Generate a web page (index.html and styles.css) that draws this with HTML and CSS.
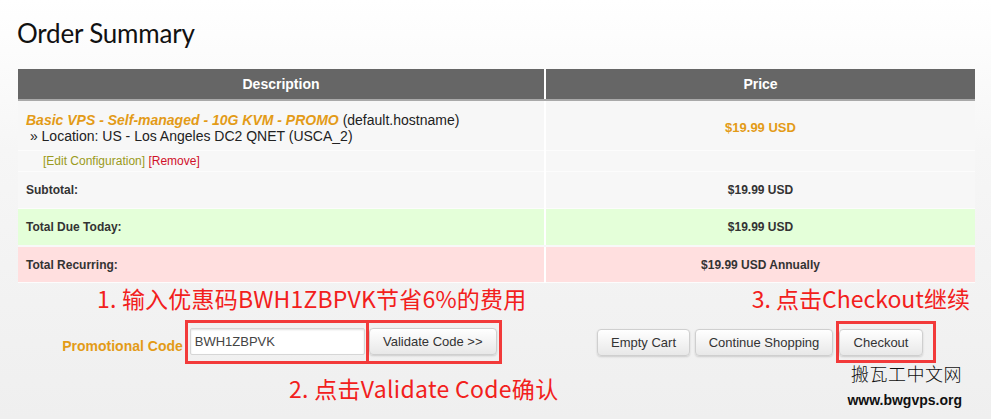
FILE: index.html
```html
<!DOCTYPE html>
<html lang="zh-CN">
<head>
  <meta charset="UTF-8">
  <title>Order Summary</title>
  <link rel="stylesheet" href="styles.css">
</head>
<body>
  <div class="page">
    <h1 class="title">Order Summary</h1>

    <table class="cart">
      <thead>
        <tr>
          <th class="col-desc">Description</th>
          <th class="col-price">Price</th>
        </tr>
      </thead>
      <tbody>
        <tr class="row-product">
          <td class="col-desc">
            <span class="product-name">Basic VPS - Self-managed - 10G KVM - PROMO</span> (default.hostname)<br>
            &nbsp;» Location: US - Los Angeles DC2 QNET (USCA_2)
          </td>
          <td class="col-price product-price">$19.99 USD</td>
        </tr>
        <tr class="row-config">
          <td class="col-desc"><span class="edit">[Edit Configuration]</span> <span class="remove">[Remove]</span></td>
          <td class="col-price"></td>
        </tr>
        <tr class="row-total">
          <td class="col-desc">Subtotal:</td>
          <td class="col-price">$19.99 USD</td>
        </tr>
        <tr class="row-total due">
          <td class="col-desc">Total Due Today:</td>
          <td class="col-price">$19.99 USD</td>
        </tr>
        <tr class="row-total recurring">
          <td class="col-desc">Total Recurring:</td>
          <td class="col-price">$19.99 USD Annually</td>
        </tr>
      </tbody>
    </table>

    <div class="halves note-row">
      <div class="half-left"><p class="note note-1">1. 输入优惠码BWH1ZBPVK节省6%的费用</p></div>
      <div class="half-right"><p class="note note-3">3. 点击Checkout继续</p></div>
    </div>

    <div class="halves action-row">
      <div class="half-left promo">
        <label class="promo-label">Promotional Code</label>
        <span class="mark mark-input"><input class="promo-input" type="text" value="BWH1ZBPVK"></span>
        <span class="mark mark-validate"><button class="btn btn-validate">Validate Code &gt;&gt;</button></span>
      </div>
      <div class="half-right buttons">
        <button class="btn btn-empty">Empty Cart</button>
        <button class="btn btn-continue">Continue Shopping</button>
        <span class="mark mark-checkout"><button class="btn btn-checkout">Checkout</button></span>
      </div>
    </div>

    <div class="halves bottom-row">
      <div class="half-left"><p class="note note-2">2. 点击Validate Code确认</p></div>
      <div class="half-right">
        <div class="watermark">
          <div class="wm-cn">搬瓦工中文网</div>
          <div class="wm-url">www.bwgvps.org</div>
        </div>
      </div>
    </div>
  </div>
</body>
</html>
```

FILE: styles.css
```css
html, body { margin: 0; padding: 0; }
body { background: linear-gradient(#ffffff 0px, #f6f6f6 150px, #efefef 419px); min-height: 419px; font-family: "Liberation Sans", Arial, sans-serif; color: #222; overflow: hidden; }
.page { width: 957px; padding: 0 0 0 18px; }

.title { font-family: Lato, "Open Sans", sans-serif; font-weight: 400; font-size: 26px; line-height: 36px; letter-spacing: -0.2px; color: #111; margin: 0 0 0 -1px; padding: 15px 0 0 0; height: 69px; box-sizing: border-box; }

.cart { width: 957px; border-collapse: collapse; }
.cart th { background: #666; color: #fff; font-size: 14px; font-weight: bold; height: 30px; padding: 0; border-bottom: 2px solid #a9a9a9; }
.cart th.col-desc { width: 526px; border-right: 2px solid #fff; }
.cart td { padding: 0; border-bottom: 1px solid #fcfcfc; background: #f7f7f7; }
.cart td.col-desc { border-right: 2px solid #fff; padding-left: 8px; }
.cart td.col-price { text-align: center; }

.row-product td { height: 45px; font-size: 14px; line-height: 16px; color: #222; padding-top: 4px; }
.product-name { color: #e39b17; font-weight: bold; font-style: italic; }
.row-product td.product-price { color: #e39b17; font-weight: bold; font-size: 13px; padding-top: 4px; height: 45px; }

.row-config td { height: 20px; font-size: 12px; }
.row-config td.col-desc { padding-left: 25px; }
.edit { color: #9a9a20; }
.remove { color: #d0102a; }

.row-total td { height: 36px; font-size: 12px; font-weight: bold; color: #333; }
.row-total.due td { background: #e4ffd9; border-bottom: 2px solid #f8f8f8; }
.row-total.recurring td { background: #ffdfdf; height: 35px; }

.halves { display: flex; }
.half-left { width: 528px; }
.half-right { width: 429px; }

.note { margin: 0; color: #f2201c; font-family: "Noto Sans CJK SC", "Liberation Sans", sans-serif; font-size: 23px; line-height: 30px; white-space: nowrap; }
.note-row { height: 37px; padding-top: 0; box-sizing: border-box; }
.note-1 { padding-left: 79px; letter-spacing: 0.2px; }
.note-3 { text-align: right; padding-right: 5px; }

.action-row { height: 44px; align-items: center; }
.promo { display: flex; align-items: center; justify-content: center; }
.promo-label { color: #e39b17; font-weight: bold; font-size: 14px; margin-top: 8px; margin-right: 2px; }
.mark { display: inline-flex; border: 3px solid #f23a3a; box-sizing: border-box; }
.mark-input { padding: 5px 1px 6px 2px; }
.mark-validate { border-left: 0; padding: 5px 2px 6px 0; }
.promo-input { width: 175px; height: 27px; box-sizing: border-box; border: 1px solid #d6d6d6; border-radius: 2px; box-shadow: inset 0 1px 2px rgba(0,0,0,0.12); background: #fff; font-family: "Liberation Sans", Arial, sans-serif; font-size: 13px; color: #444; padding: 0 4px; outline: none; }

.buttons { display: flex; align-items: center; padding-left: 51px; box-sizing: border-box; }
.btn { font-family: "Liberation Sans", Arial, sans-serif; font-size: 13px; color: #333; height: 27px; padding: 0 12px; border: 1px solid #cfcfcf; border-radius: 4px; background: linear-gradient(#ffffff, #e8e8e8); box-shadow: 0 1px 2px rgba(0,0,0,0.15); cursor: pointer; }
.btn-validate { width: 128px; }
.btn-empty { width: 93px; }
.btn-continue { width: 138px; margin-left: 5px; }
.mark-checkout { margin-left: 3px; padding: 5px 10px 4px 0; }
.btn-checkout { width: 84px; }

.bottom-row { height: 55px; }
.note-2 { padding-left: 271px; padding-top: 9px; letter-spacing: 0.3px; }
.watermark { text-align: right; padding-right: 13px; margin-top: -3px; }
.wm-cn { font-family: "Noto Sans CJK SC", sans-serif; font-weight: 300; font-size: 18px; letter-spacing: 0.5px; color: #111; line-height: 24px; }
.wm-url { font-family: "Liberation Sans", Arial, sans-serif; font-weight: bold; font-size: 14px; color: #111; line-height: 20px; margin-top: 5px; }
```
